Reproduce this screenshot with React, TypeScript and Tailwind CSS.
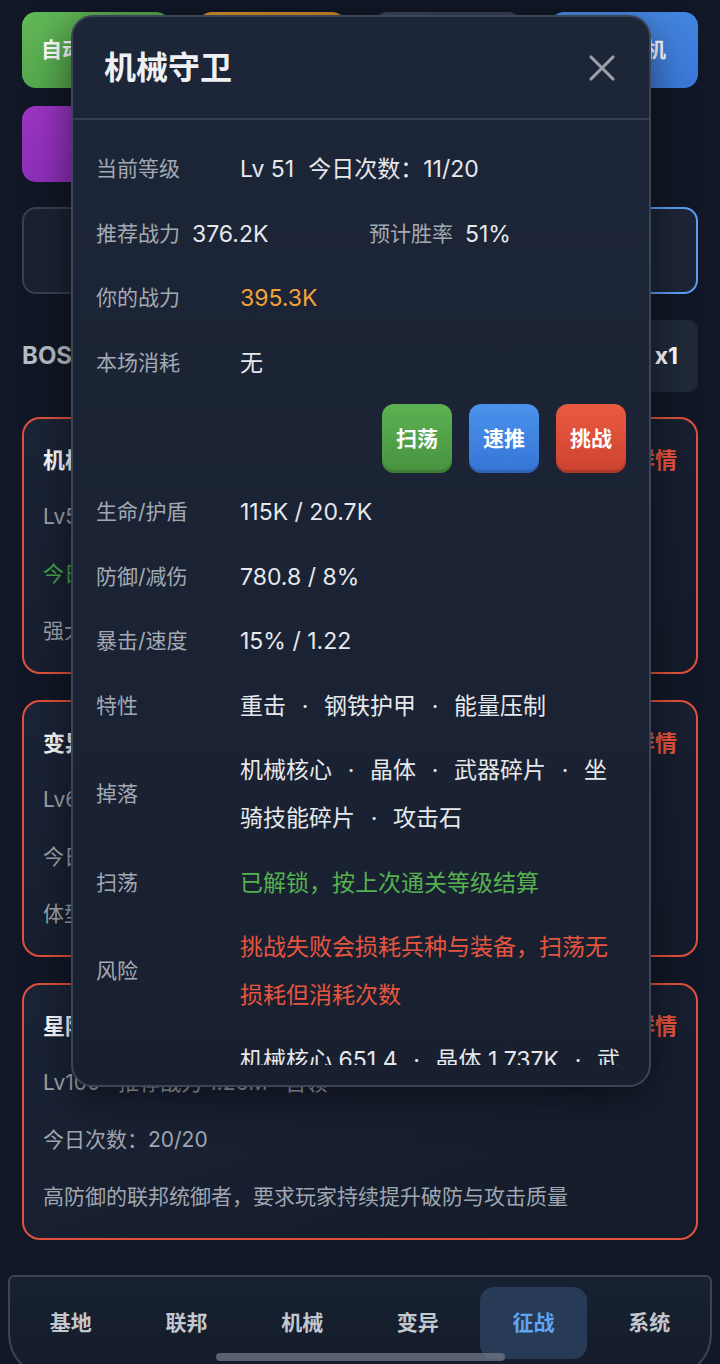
import {X} from "lucide-react";

type Boss = {
    name: string,
    level: string,
    today: string,
    todayGreen?: boolean,
    desc: string
}

const bosses: Boss[] = [
    {name: '机械守卫', level: 'Lv51 · 推荐战力 376.2K · 普通', today: '今日次数：11/20', todayGreen: true, desc: '强大的机械守卫，装甲厚重，擅长持续压制'},
    {name: '变异巨兽', level: 'Lv65 · 推荐战力 612.4K · 精英', today: '今日次数：20/20', desc: '体型巨大的变异生物，攻击附带腐蚀效果'},
    {name: '星际统帅', level: 'Lv100 · 推荐战力 1.26M · 首领', today: '今日次数：20/20', desc: '高防御的联邦统御者，要求玩家持续提升破防与攻击质量'},
];

const tabs = ['基地', '联邦', '机械', '变异', '征战', '系统'];

function Sep() {
    return <span className="inline-block w-[38px] text-center">·</span>;
}

function List({items}: {items: string[]}) {
    return (
        <>
            {items.map((item, i) => (
                <span key={i}>
                    {i > 0 && <Sep/>}
                    {item}
                </span>
            ))}
        </>
    );
}

function Row({label, children, color = 'text-[#e6e8ec]'}: {label: string, children: React.ReactNode, color?: string}) {
    return (
        <div className="flex items-center py-[8.25px]">
            <div className="w-[144px] shrink-0 text-[21px] leading-[48px] text-[#a3a9b3]">{label}</div>
            <div className={`flex-1 text-[23px] leading-[48px] ${color}`}>{children}</div>
        </div>
    );
}

function BossModal() {
    return (
        <div className="absolute left-[71px] top-[15px] flex h-[1072px] w-[580px] flex-col overflow-hidden rounded-[22px] border-2 border-[#3b4558] bg-linear-to-b from-[#1d2638] to-[#182030] pb-[20px] shadow-[0_10px_40px_rgba(0,0,0,0.5)]">
            <div className="flex h-[103px] shrink-0 items-center justify-between border-b-2 border-[#343f51] pl-[31px] pr-[25px]">
                <h1 className="text-[32px] font-bold text-[#eef0f3]">机械守卫</h1>
                <X className="h-[44px] w-[44px] text-[#9ba1aa]" strokeWidth={1.7}/>
            </div>

            <div className="min-h-0 flex-1 overflow-hidden px-[23px] pt-[17px]">
                <Row label="当前等级">
                    Lv 51<span className="ml-[14px]">今日次数：11/20</span>
                </Row>

                <div className="grid grid-cols-2 gap-4 py-[8.25px] leading-[48px]">
                    <div className="flex items-center gap-[12px]">
                        <span className="text-[21px] text-[#a3a9b3]">推荐战力</span>
                        <span className="text-[23px] text-[#e6e8ec]">376.2K</span>
                    </div>
                    <div className="flex items-center gap-[12px]">
                        <span className="text-[21px] text-[#a3a9b3]">预计胜率</span>
                        <span className="text-[23px] text-[#e6e8ec]">51%</span>
                    </div>
                </div>

                <Row label="你的战力" color="text-[#f2a23c]">395.3K</Row>
                <Row label="本场消耗">无</Row>

                <div className="flex justify-end gap-[17px] pb-[7px] pt-[9px]">
                    <button className="h-[69px] w-[70px] rounded-[12px] bg-linear-to-b from-[#5db252] to-[#47923f] text-[21px] font-bold text-white shadow-[inset_0_-3px_0_rgba(0,0,0,0.15)]">扫荡</button>
                    <button className="h-[69px] w-[70px] rounded-[12px] bg-linear-to-b from-[#4b92ec] to-[#3675d6] text-[21px] font-bold text-white shadow-[inset_0_-3px_0_rgba(0,0,0,0.15)]">速推</button>
                    <button className="h-[69px] w-[70px] rounded-[12px] bg-linear-to-b from-[#ea5a41] to-[#cd4330] text-[21px] font-bold text-white shadow-[inset_0_-3px_0_rgba(0,0,0,0.15)]">挑战</button>
                </div>

                <Row label="生命/护盾">115K / 20.7K</Row>
                <Row label="防御/减伤">780.8 / 8%</Row>
                <Row label="暴击/速度">15% / 1.22</Row>
                <Row label="特性"><List items={['重击', '钢铁护甲', '能量压制']}/></Row>
                <Row label="掉落"><List items={['机械核心', '晶体', '武器碎片', '坐骑技能碎片', '攻击石']}/></Row>
                <Row label="扫荡" color="text-[#55b24f]">已解锁，按上次通关等级结算</Row>
                <Row label="风险" color="text-[#e8553e]">挑战失败会损耗兵种与装备，扫荡无损耗但消耗次数</Row>
                <Row label="预估"><List items={['机械核心 651.4', '晶体 1.737K', '武器碎片 980', '坐骑技能碎片 12']}/></Row>
            </div>
        </div>
    );
}

export default function App() {
    return (
        <div className="relative flex h-screen flex-col overflow-hidden bg-[#111726] font-[family-name:Inter,'Noto_Sans_CJK_SC',sans-serif]">

            <main className="min-h-0 flex-1 overflow-hidden px-[22px] pt-[12px]">
                <div className="grid grid-cols-4 gap-x-[28px] gap-y-[18px]">
                    <button className="flex h-[76px] items-center justify-center rounded-[14px] bg-linear-to-br from-[#62b957] to-[#4b9a45] text-[21px] font-bold text-white">自动挑战 开</button>
                    <button className="flex h-[76px] items-center justify-center rounded-[14px] bg-linear-to-br from-[#d9952f] to-[#c47d22] text-[21px] font-bold text-white">一键领取</button>
                    <button className="flex h-[76px] items-center justify-center rounded-[14px] bg-linear-to-br from-[#3a475c] to-[#2e394b] text-[21px] font-bold text-white">战斗记录</button>
                    <button className="flex h-[76px] items-center justify-center rounded-[14px] bg-linear-to-br from-[#4a8fe8] to-[#3a78d8] text-[21px] font-bold text-white">离线挂机</button>
                    <button className="flex h-[76px] items-center justify-center rounded-[14px] bg-linear-to-br from-[#9c35c4] to-[#822aae] text-[21px] font-bold text-white">商店</button>
                </div>

                <div className="mt-[25px] grid h-[87px] grid-cols-2 gap-[12px]">
                    <div className="flex items-center justify-center rounded-[14px] border-2 border-[#364153] bg-[#1a2232] text-[21px] text-[#a3a9b3]">普通模式</div>
                    <div className="flex items-center justify-center rounded-[14px] border-2 border-[#5b9ef2] bg-[#1c2536] text-[21px] text-[#e6e8ec]">BOSS模式</div>
                </div>

                <div className="mt-[26px] flex h-[72px] items-center justify-between">
                    <h2 className="text-[24px] font-bold text-[#b7bcc5]">BOSS挑战</h2>
                    <div className="flex h-full items-center rounded-[10px] bg-[#202939] px-[20px] text-[23px] font-bold text-white">
                        <span className="mr-[24px] text-[#a3a9b3]">倍速</span>x1
                    </div>
                </div>

                <div className="mt-[25px] flex flex-col gap-[26px]">
                    {bosses.map(boss => (
                        <div key={boss.name} className="flex flex-col gap-[13px] rounded-[18px] border-2 border-[#e0523d] bg-linear-to-br from-[#1b2437] to-[#141b2a] p-[19px]">
                            <div className="flex h-[44px] items-center justify-between">
                                <span className="text-[22px] font-bold text-white">{boss.name}</span>
                                <span className="text-[22px] font-bold text-[#e8553e]">详情</span>
                            </div>
                            <div className="flex h-[44px] items-center text-[21px] text-[#a0a6b0]">{boss.level}</div>
                            <div className={`flex h-[44px] items-center text-[21px] ${boss.todayGreen ? 'text-[#4aa54c]' : 'text-[#a0a6b0]'}`}>{boss.today}</div>
                            <div className="flex h-[44px] items-center text-[21px] text-[#a0a6b0]">{boss.desc}</div>
                        </div>
                    ))}
                </div>
            </main>

            <nav className="relative mx-2 -mb-[14px] h-[103px] shrink-0 rounded-t-[6px] rounded-b-[44px] border-2 border-[#3a4456] bg-linear-to-b from-[#182132] to-[#141c2a] px-[7px] pt-[10px]">
                <div className="grid grid-cols-6 gap-[8px]">
                    {tabs.map(tab => (
                        <div
                            key={tab}
                            className={`flex h-[72px] items-center justify-center rounded-[14px] text-[21px] font-bold ${tab === '征战' ? 'bg-[#283b56] text-[#5fa5f5]' : 'text-[#c3c7ce]'}`}
                        >
                            {tab}
                        </div>
                    ))}
                </div>
            </nav>

            <div className="absolute bottom-[3px] left-[216px] h-[8px] w-[289px] rounded-full bg-[#6b7384]/80"></div>

            <BossModal/>
        </div>
    );
}
